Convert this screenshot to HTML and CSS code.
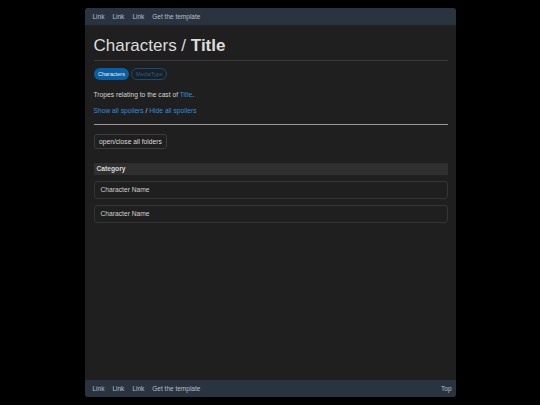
FILE: index.html
```html
<!DOCTYPE html>
<html lang="en">
<head>
<meta charset="utf-8">
<title>Characters / Title</title>
<link rel="stylesheet" href="styles.css">
</head>
<body>
<div class="page">
  <nav class="nav">
    <a class="nav-link" href="#">Link</a>
    <a class="nav-link" href="#">Link</a>
    <a class="nav-link" href="#">Link</a>
    <a class="nav-link" href="#">Get the template</a>
  </nav>
  <main class="main">
    <h1 class="title">Characters / <strong>Title</strong></h1>
    <div class="badges">
      <span class="badge badge-fill">Characters</span>
      <span class="badge badge-outline">MediaType</span>
    </div>
    <p class="text">Tropes relating to the cast of <a class="link" href="#">Title</a>.</p>
    <p class="text"><a class="link" href="#">Show all spoilers</a> / <a class="link" href="#">Hide all spoilers</a></p>
    <hr class="rule">
    <button class="btn" type="button">open/close all folders</button>
    <div class="category">Category</div>
    <div class="folder">Character Name</div>
    <div class="folder">Character Name</div>
  </main>
  <nav class="nav footer">
    <a class="nav-link" href="#">Link</a>
    <a class="nav-link" href="#">Link</a>
    <a class="nav-link" href="#">Link</a>
    <a class="nav-link" href="#">Get the template</a>
    <a class="nav-link top" href="#">Top</a>
  </nav>
</div>
</body>
</html>
```

FILE: styles.css
```css
html, body {
  margin: 0;
  padding: 0;
  background: #000;
}
body {
  padding: 8px 0;
  font-family: "Liberation Sans", Arial, sans-serif;
  color: #d4d4d4;
  font-size: 6.7px;
  line-height: 10px;
}
.page {
  width: 371px;
  margin: 0 auto;
  min-height: 389px;
  display: flex;
  flex-direction: column;
  background: #1f1f1f;
  border-radius: 3px;
  overflow: hidden;
}
.nav {
  height: 17px;
  flex: none;
  display: flex;
  align-items: center;
  padding: 0 4px;
  background: #2a3441;
  font-size: 6.5px;
}
.nav-link {
  color: #b9bfc7;
  text-decoration: none;
  padding: 0 4px;
}
.nav-link.top {
  margin-left: auto;
  padding-right: 0;
}
.main {
  flex: 1;
  padding: 0 8px 0 9px;
}
.title {
  margin: 11px 0 0;
  font-size: 17px;
  line-height: 20.4px;
  font-weight: normal;
  color: #dcdcdc;
  padding-bottom: 3.5px;
  border-bottom: 1px solid #3a3a3a;
}
.title strong {
  font-weight: bold;
}
.badges {
  display: flex;
  gap: 2px;
  margin-top: 7px;
}
.badge {
  display: inline-flex;
  align-items: center;
  height: 12px;
  box-sizing: border-box;
  padding: 0 4.5px;
  border-radius: 6px;
  font-size: 5.5px;
}
.badge-fill {
  background: #0a5fa3;
  color: #e6edf4;
}
.badge-outline {
  border: 1px solid #0b4d85;
  color: #1c5f97;
  padding: 0 3.5px;
}
.text {
  margin: 10px 0 6.5px;
}
.text + .text {
  margin-top: 0;
}
.link {
  color: #2f8fdc;
  text-decoration: none;
}
.rule {
  margin: 8px 0 9px;
  border: 0;
  border-top: 1px solid #9a9a9a;
  height: 0;
}
.btn {
  display: block;
  height: 15px;
  padding: 0 4.5px;
  background: #1f1f1f;
  color: #dcdcdc;
  border: 1px solid #3b3b3b;
  border-radius: 3px;
  font-family: inherit;
  font-size: 6.7px;
  line-height: 13px;
}
.category {
  margin-top: 14px;
  height: 12px;
  line-height: 12px;
  padding: 0 3px;
  background: #2f2f2f;
  font-weight: bold;
  color: #d8d8d8;
}
.folder {
  margin-top: 6px;
  height: 18px;
  box-sizing: border-box;
  line-height: 16px;
  padding: 0 6px;
  border: 1px solid #353535;
  border-radius: 3px;
  color: #d0d0d0;
}
```
